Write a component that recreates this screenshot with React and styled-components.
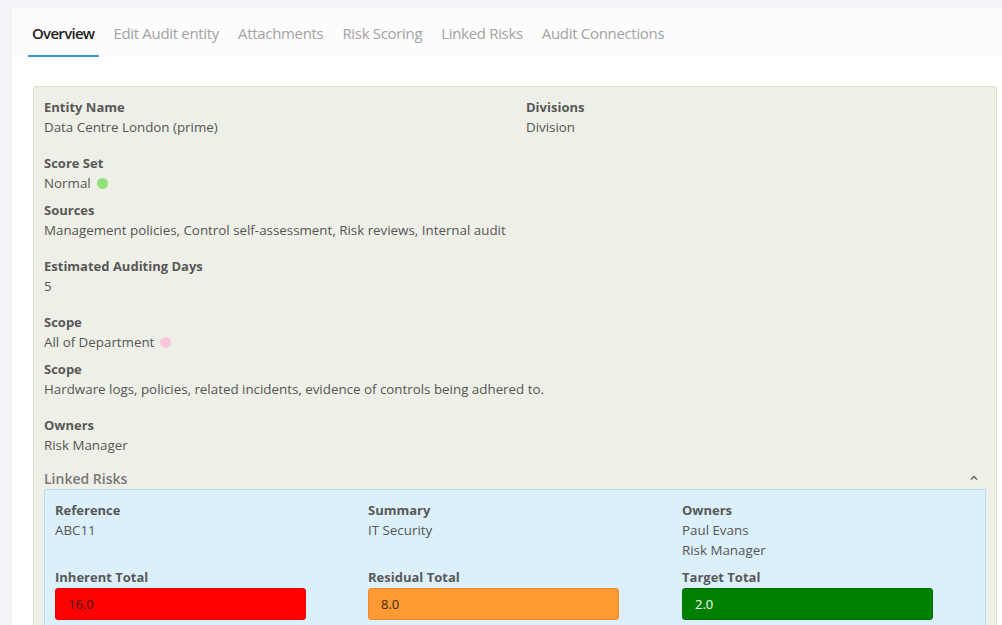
import React from 'react';
import styled, { createGlobalStyle } from 'styled-components';

const GlobalStyle = createGlobalStyle`
  html, body {
    margin: 0;
    padding: 0;
    background: #f3f4f8;
    font-family: "Open Sans", "Noto Sans", Arial, sans-serif;
    color: #555;
  }
  * { box-sizing: border-box; }
`;

const Page = styled.div`
  padding: 8px 0 0 12px;
  width: 1002px;
  height: 625px;
  overflow: hidden;
`;

const Panel = styled.div`
  background: #fff;
  min-height: 700px;
`;

const TabBar = styled.div`
  display: flex;
  align-items: flex-end;
  height: 49px;
  padding-left: 16px;
  background: #fcfcfc;
`;

const Tab = styled.div`
  padding: 0 ${p => (p.active ? 5 : 4)}px 12px 4px;
  margin-right: ${p => (p.active ? 10 : 11)}px;
  font-size: 15px;
  letter-spacing: ${p => (p.active ? '-0.7px' : '-0.32px')};
  line-height: 20px;
  color: ${p => (p.active ? '#222' : '#a3a3a3')};
  font-weight: ${p => (p.active ? 600 : 400)};
  border-bottom: 2px solid ${p => (p.active ? '#3f93dd' : 'transparent')};
`;

const Body = styled.div`
  padding: 29px 5px 0 21px;
`;

const EntityCard = styled.div`
  background: #eef0e7;
  border: 1px solid #d9e3c9;
  border-radius: 3px;
  padding: 10px 10px 0 10px;
  min-height: 600px;
`;

const TwoCols = styled.div`
  display: grid;
  grid-template-columns: 482px 1fr;
`;

const Field = styled.div`
  margin-bottom: ${p => (p.tight ? 6 : 16)}px;
`;

const Label = styled.div`
  font-size: 13px;
  font-weight: 700;
  line-height: 20px;
  color: #585858;
`;

const Value = styled.div`
  font-size: 13.35px;
  line-height: ${p => (p.dotted ? 21 : 20)}px;
  height: ${p => (p.dotted ? 21 : 20)}px;
  color: #555;
  display: flex;
  align-items: center;
`;

const Dot = styled.span`
  display: inline-block;
  width: 11px;
  height: 11px;
  border-radius: 50%;
  margin-left: 6px;
  background: ${p => p.color};
`;

const SectionHead = styled.div`
  display: flex;
  justify-content: space-between;
  align-items: center;
  height: 20px;
  margin-top: -3px;
  margin-bottom: 1px;
  padding-right: 7px;
  font-size: 14px;
  font-weight: 600;
  color: #777;
`;

const RiskCard = styled.div`
  background: #dcf0fb;
  border: 1px solid #b7dcf0;
  border-radius: 2px;
  padding: 10px 10px 20px 10px;
`;

const ThreeCols = styled.div`
  display: grid;
  grid-template-columns: 313px 314px 1fr;
  margin-bottom: ${p => p.gap || 0}px;
`;

const ScoreBox = styled.div`
  width: 251px;
  height: 32px;
  margin-top: 1px;
  border-radius: 3px;
  border: 1px solid ${p => p.border};
  background: ${p => p.bg};
  color: ${p => p.fg};
  font-size: 13px;
  display: flex;
  align-items: center;
  padding-left: 12px;
`;

const Chevron = () => (
  <svg width="10" height="10" viewBox="0 0 10 10">
    <path d="M2 6.5 L5 3.5 L8 6.5" fill="none" stroke="#666" strokeWidth="1.5" />
  </svg>
);

const tabs = ['Overview', 'Edit Audit entity', 'Attachments', 'Risk Scoring', 'Linked Risks', 'Audit Connections'];

export default function App() {
  return (
    <>
      <GlobalStyle />
      <Page>
        <Panel>
          <TabBar>
            {tabs.map((t, i) => (
              <Tab key={t} active={i === 0}>{t}</Tab>
            ))}
          </TabBar>
          <Body>
            <EntityCard>
              <TwoCols>
                <Field>
                  <Label>Entity Name</Label>
                  <Value>Data Centre London (prime)</Value>
                </Field>
                <Field>
                  <Label>Divisions</Label>
                  <Value>Division</Value>
                </Field>
              </TwoCols>
              <Field tight>
                <Label>Score Set</Label>
                <Value dotted>Normal <Dot color="#92e27a" /></Value>
              </Field>
              <Field>
                <Label>Sources</Label>
                <Value>Management policies, Control self-assessment, Risk reviews, Internal audit</Value>
              </Field>
              <Field>
                <Label>Estimated Auditing Days</Label>
                <Value>5</Value>
              </Field>
              <Field tight>
                <Label>Scope</Label>
                <Value dotted>All of Department <Dot color="#fcc6da" /></Value>
              </Field>
              <Field>
                <Label>Scope</Label>
                <Value>Hardware logs, policies, related incidents, evidence of controls being adhered to.</Value>
              </Field>
              <Field>
                <Label>Owners</Label>
                <Value>Risk Manager</Value>
              </Field>
              <SectionHead>
                <span>Linked Risks</span>
                <Chevron />
              </SectionHead>
              <RiskCard>
                <ThreeCols gap={7}>
                  <div>
                    <Label>Reference</Label>
                    <Value>ABC11</Value>
                  </div>
                  <div>
                    <Label>Summary</Label>
                    <Value>IT Security</Value>
                  </div>
                  <div>
                    <Label>Owners</Label>
                    <Value>Paul Evans</Value>
                    <Value>Risk Manager</Value>
                  </div>
                </ThreeCols>
                <ThreeCols>
                  <div>
                    <Label>Inherent Total</Label>
                    <ScoreBox bg="#ff0000" border="#e40000" fg="#3a1a1a">16.0</ScoreBox>
                  </div>
                  <div>
                    <Label>Residual Total</Label>
                    <ScoreBox bg="#ff9a33" border="#ec8c2c" fg="#3a2a1a">8.0</ScoreBox>
                  </div>
                  <div>
                    <Label>Target Total</Label>
                    <ScoreBox bg="#008000" border="#007000" fg="#fff">2.0</ScoreBox>
                  </div>
                </ThreeCols>
              </RiskCard>
            </EntityCard>
          </Body>
        </Panel>
      </Page>
    </>
  );
}
